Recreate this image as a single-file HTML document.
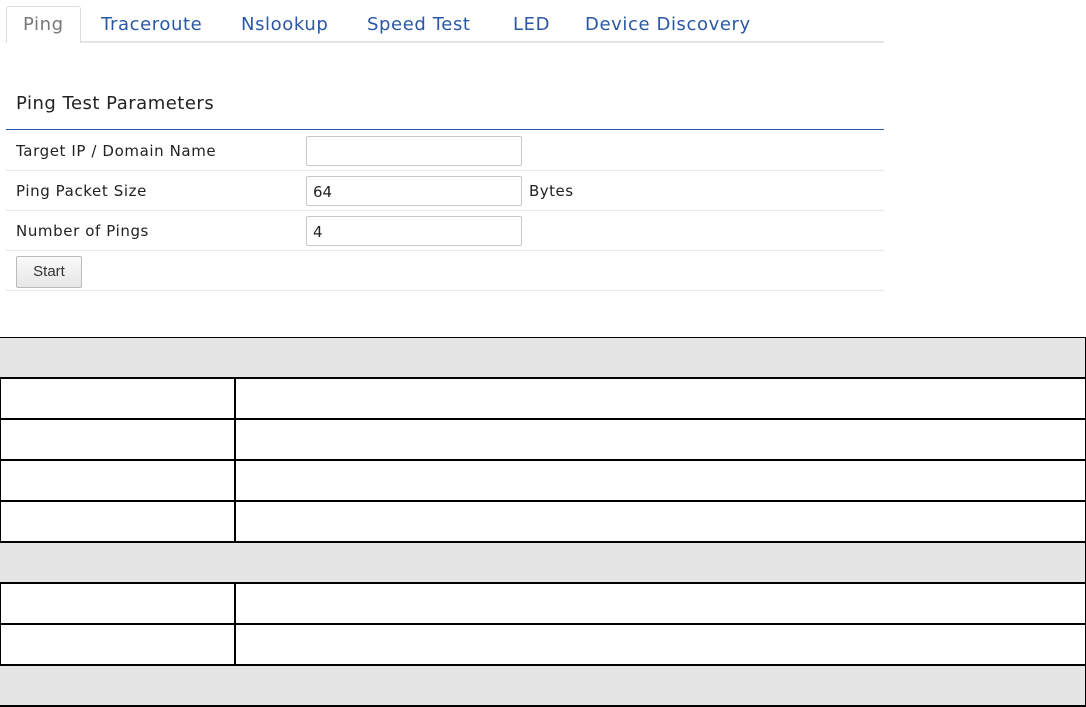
<!DOCTYPE html>
<html><head><style>
body{margin:0;background:#fff;font-family:"DejaVu Sans",Verdana,sans-serif;width:1086px;height:707px;overflow:hidden;position:relative}
.a{position:absolute}
.tab{position:absolute;top:14px;font-size:18px;letter-spacing:0.6px;color:#2a57a6}
.lbl{position:absolute;left:16px;font-size:15px;letter-spacing:0.6px;color:#222}
.inp{position:absolute;left:306px;width:214px;height:28px;border:1px solid #c8c8c8;border-radius:2px;font-size:15px;line-height:30px;box-sizing:content-box;color:#222}
.inp span{padding-left:6px}
.sep{position:absolute;left:6px;width:878px;height:1px;background:#e6e6e6}
.h{position:absolute;left:0;width:1085px;height:40px;background:#e5e5e5}
.hl{position:absolute;left:0;width:1086px;height:2px;background:#000}
</style></head><body>
<div class="a" style="left:6px;top:6px;width:73px;height:36px;border:1px solid #ddd;border-bottom:none;border-radius:3px 3px 0 0;background:#fff;z-index:2"></div>
<div class="a" style="left:6px;top:41px;width:878px;height:2px;background:#e4e4e4"></div>
<div class="tab" style="left:23px;color:#777;z-index:3">Ping</div>
<div class="tab" style="left:101px">Traceroute</div>
<div class="tab" style="left:241px">Nslookup</div>
<div class="tab" style="left:367px">Speed Test</div>
<div class="tab" style="left:513px">LED</div>
<div class="tab" style="left:585px">Device Discovery</div>
<div class="a" style="left:16px;top:93px;font-size:18px;letter-spacing:0.5px;color:#222">Ping Test Parameters</div>
<div class="a" style="left:6px;top:129px;width:878px;height:1px;background:#2a57a6"></div>
<div class="lbl" style="top:142px">Target IP / Domain Name</div>
<div class="inp" style="top:136px"></div>
<div class="sep" style="top:170px"></div>
<div class="lbl" style="top:182px">Ping Packet Size</div>
<div class="inp" style="top:176px"><span>64</span></div>
<div class="a" style="left:529px;top:182px;font-size:15px;letter-spacing:0.5px;color:#222">Bytes</div>
<div class="sep" style="top:210px"></div>
<div class="lbl" style="top:222px">Number of Pings</div>
<div class="inp" style="top:216px"><span>4</span></div>
<div class="sep" style="top:250px"></div>
<div class="a" style="left:16px;top:256px;width:64px;height:30px;border:1px solid #bbb;border-radius:2px;background:linear-gradient(#fafafa,#e6e6e6);font-family:'Liberation Sans',Arial,sans-serif;font-size:15px;line-height:30px;text-align:center;color:#333">Start</div>
<div class="sep" style="top:290px"></div>

<div class="a" style="left:0;top:337px;width:1084px;height:368px;border:1px solid #000;border-right:2px solid #000"></div>
<div class="h" style="top:338px"></div>
<div class="h" style="top:543px"></div>
<div class="h" style="top:666px"></div>
<div class="hl" style="top:377px"></div>
<div class="hl" style="top:418px"></div>
<div class="hl" style="top:459px"></div>
<div class="hl" style="top:500px"></div>
<div class="hl" style="top:541px"></div>
<div class="hl" style="top:582px"></div>
<div class="hl" style="top:623px"></div>
<div class="hl" style="top:664px"></div>
<div class="hl" style="top:705px"></div>
<div class="a" style="left:234px;top:378px;width:2px;height:164px;background:#000"></div>
<div class="a" style="left:234px;top:583px;width:2px;height:82px;background:#000"></div>
</body></html>
